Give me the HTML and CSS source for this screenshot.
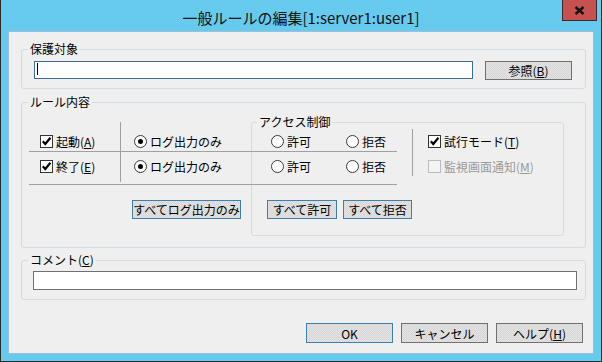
FILE: index.html
```html
<!DOCTYPE html>
<html lang="ja">
<head>
  <meta charset="UTF-8" />
  <title>一般ルールの編集</title>
  <link rel="stylesheet" href="styles.css">
</head>
<body>
  <div class="window">
    <div class="titlebar">
      <span class="title">一般ルールの編集[1:server1:user1]</span>
      <span class="close">
        <svg width="11" height="9" viewBox="0 0 11 9"><path d="M1.5 1 L9.5 8 M9.5 1 L1.5 8" stroke="#111" stroke-width="2.4" /></svg>
      </span>
    </div>
    <div class="client">
      <fieldset class="group target">
        <legend>保護対象</legend>
        <div class="target-body">
          <div class="textbox focused"><span class="caret"></span></div>
          <button class="btn browse">参照(<u>B</u>)</button>
        </div>
      </fieldset>

      <fieldset class="group rule">
        <legend>ルール内容</legend>
        <div class="rule-grid">
          <fieldset class="group access"><legend>アクセス制御</legend></fieldset>
          <div class="vsep-a"></div>
          <div class="vsep-b"></div>

          <div class="cell r1 c-ev">
            <span class="opt"><span class="box"><svg width="11" height="11" viewBox="0 0 11 11"><path d="M1.8 5.2 L4.3 8 L9.4 1.8" fill="none" stroke="#000" stroke-width="2.2" /></svg></span><span>起動(<u>A</u>)</span></span>
          </div>
          <div class="cell r1 c-log">
            <span class="opt"><span class="radio on"></span><span>ログ出力のみ</span></span>
          </div>
          <div class="cell r1 c-acc">
            <span class="opt allow"><span class="radio"></span><span>許可</span></span>
            <span class="opt"><span class="radio"></span><span>拒否</span></span>
          </div>
          <div class="cell r1 c-mode">
            <span class="opt"><span class="box"><svg width="11" height="11" viewBox="0 0 11 11"><path d="M1.8 5.2 L4.3 8 L9.4 1.8" fill="none" stroke="#000" stroke-width="2.2" /></svg></span><span>試行モード(<u>T</u>)</span></span>
          </div>

          <div class="cell r2 c-ev">
            <span class="opt"><span class="box"><svg width="11" height="11" viewBox="0 0 11 11"><path d="M1.8 5.2 L4.3 8 L9.4 1.8" fill="none" stroke="#000" stroke-width="2.2" /></svg></span><span>終了(<u>E</u>)</span></span>
          </div>
          <div class="cell r2 c-log">
            <span class="opt"><span class="radio on"></span><span>ログ出力のみ</span></span>
          </div>
          <div class="cell r2 c-acc">
            <span class="opt allow"><span class="radio"></span><span>許可</span></span>
            <span class="opt"><span class="radio"></span><span>拒否</span></span>
          </div>
          <div class="cell r2 c-mode">
            <span class="opt disabled"><span class="box"></span><span>監視画面通知(<u>M</u>)</span></span>
          </div>

          <div class="log-btns">
            <button class="btn blue all-log">すべてログ出力のみ</button>
          </div>
          <div class="acc-btns">
            <button class="btn blue all-allow">すべて許可</button>
            <button class="btn blue all-deny">すべて拒否</button>
          </div>
        </div>
      </fieldset>

      <fieldset class="group comment">
        <legend>コメント(<u>C</u>)</legend>
        <div class="comment-body">
          <div class="textbox wide"></div>
        </div>
      </fieldset>

      <div class="actions">
        <button class="btn blue">OK</button>
        <button class="btn">キャンセル</button>
        <button class="btn">ヘルプ(<u>H</u>)</button>
      </div>
    </div>
  </div>
</body>
</html>
```

FILE: styles.css
```css
* {
  box-sizing: border-box;
}
body {
  margin: 0;
  font-family: "Noto Sans CJK JP", "Noto Sans", sans-serif;
  font-size: 12px;
  color: #000;
  background: #fff;
}
.window {
  width: 602px;
  height: 362px;
  display: flex;
  flex-direction: column;
  border: 1px solid #2b2b2b;
  border-top: 0;
  background: repeating-conic-gradient(#6bcdef 0 25%, #61c7eb 0 50%) 0 0 / 2px 2px;
}
.titlebar {
  flex: none;
  height: 31px;
  display: grid;
  grid-template-columns: 1fr auto 1fr;
}
.title {
  grid-column: 2;
  font-size: 15px;
  line-height: 20px;
  padding-top: 8px;
  white-space: nowrap;
  color: #111;
}
.close {
  grid-column: 3;
  justify-self: end;
  width: 35px;
  height: 21px;
  margin-right: 4px;
  background: #c75050;
  border: 1px solid #3d2a2a;
  border-top: 0;
  display: flex;
  align-items: center;
  justify-content: center;
}
.client {
  flex: 1;
  margin: 0 7px 7px;
  background: #efefef;
  border: 1px solid #9cc0d8;
  padding: 9px 7px 0 12px;
}

/* group boxes */
.group {
  margin: 0;
  padding: 0;
  min-width: 0;
  border: 1px solid #d3dce3;
  border-radius: 3px;
}
.group > legend {
  margin-left: 6px;
  padding: 0 2px;
  font-size: 12px;
  line-height: 16px;
}
.target-body {
  display: flex;
  align-items: flex-start;
  gap: 12px;
  padding: 4px 13px 8px 12px;
}
.textbox {
  height: 18px;
  background: #fff;
  border: 1px solid #707070;
}
.textbox.focused {
  width: 439px;
  border-color: #3a6c9c;
  padding: 1px 0 0 2px;
}
.caret {
  display: block;
  width: 1px;
  height: 12px;
  background: #000;
}
.textbox.wide {
  height: 19px;
}
.browse {
  width: 87px;
}
.rule {
  margin-top: 5px;
}
.comment {
  margin-top: 4px;
}
.comment-body {
  padding: 3px 8px 9px 11px;
}

/* rule table */
.rule-grid {
  display: grid;
  grid-template-columns: 7px 91px 131px 146px 15px 152px 21px;
  grid-template-rows: 4px 8px 30px 33px 51px 11px;
}
.access {
  grid-column: 4 / 7;
  grid-row: 2 / 6;
}
.access > legend {
  margin-left: 5px;
}
.vsep-a {
  grid-column: 3;
  grid-row: 3 / 5;
  align-self: start;
  height: 60px;
  border-left: 1px solid #a0a0a0;
}
.vsep-b {
  grid-column: 6;
  grid-row: 3 / 5;
  align-self: start;
  margin-top: 7px;
  height: 47px;
  border-left: 1px solid #a0a0a0;
}
.cell {
  display: flex;
  align-items: flex-start;
  border-bottom: 1px solid #a0a0a0;
}
.r1 {
  grid-row: 3;
  padding-top: 13px;
}
.r2 {
  grid-row: 4;
  padding-top: 8px;
}
.c-ev {
  grid-column: 2;
  padding-left: 11px;
}
.c-log {
  grid-column: 3;
  padding-left: 14px;
}
.c-acc {
  grid-column: 4;
  padding-left: 20px;
}
.c-mode {
  grid-column: 6;
  padding-left: 16px;
  border-bottom: 0;
}
.opt {
  display: flex;
  align-items: center;
  height: 13px;
  line-height: 13px;
  white-space: nowrap;
}
.opt.allow {
  width: 75px;
}
.box {
  flex: none;
  width: 13px;
  height: 13px;
  margin-right: 3px;
  border: 1px solid #333;
  background: #fff;
  display: flex;
  align-items: center;
  justify-content: center;
}
.radio {
  flex: none;
  width: 13px;
  height: 13px;
  margin-right: 3px;
  border: 1px solid #3a3a3a;
  border-radius: 50%;
  background: #fff;
  display: flex;
  align-items: center;
  justify-content: center;
}
.radio.on::after {
  content: "";
  width: 5px;
  height: 5px;
  border-radius: 50%;
  background: #000;
}
.opt.disabled {
  color: #9a9a9a;
}
.opt.disabled .box {
  border-color: #bcbcbc;
  background: #f4f4f4;
}
.log-btns {
  grid-column: 3;
  grid-row: 5;
  padding: 15px 0 0 12px;
}
.acc-btns {
  grid-column: 4 / 6;
  grid-row: 5;
  display: flex;
  align-items: flex-start;
  gap: 6px;
  padding: 15px 0 0 16px;
}
.all-log {
  width: 109px;
}
.all-allow {
  width: 70px;
}
.all-deny {
  width: 69px;
}

/* buttons */
.btn {
  font: inherit;
  font-size: 12px;
  color: #000;
  height: 19px;
  padding: 0;
  line-height: 17px;
  border: 1px solid #707070;
  border-radius: 0;
  background: repeating-conic-gradient(#e3e3e3 0 25%, #d7d7d7 0 50%) 0 0 / 2px 2px;
  white-space: nowrap;
  overflow: visible;
}
.btn.blue {
  border-color: #3c7fb1;
}
.actions {
  display: flex;
  justify-content: flex-end;
  gap: 8px;
  margin-top: 23px;
  padding-right: 3px;
}
.actions .btn {
  width: 87px;
  height: 20px;
}
```
